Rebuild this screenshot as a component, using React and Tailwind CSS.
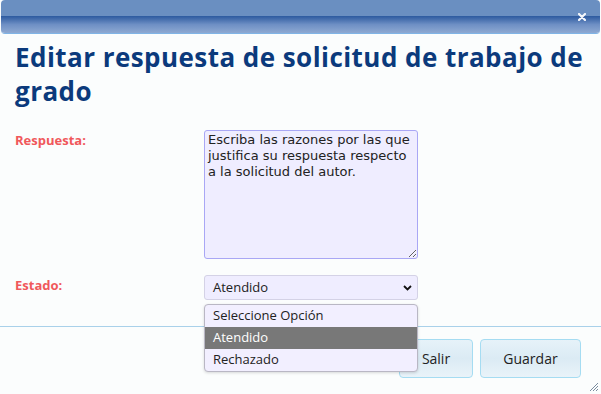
import React from "react";

export default function App() {
  return (
    <div className="relative w-[601px] h-[394px] overflow-hidden bg-[#fbfdfd]" style={{ fontFamily: '"Open Sans", sans-serif' }}>
      {/* title bar */}
      <div className="mx-[1px] h-[34px] rounded-[4px] border-b border-[#7fb4e6] overflow-hidden flex flex-col relative">
        <div className="h-[16px] bg-[#6a8fc1]" />
        <div className="flex-1 bg-gradient-to-b from-[#2c5a9f] via-[#6e8fc4] to-[#8ea9d2]" />
        <svg className="absolute right-[14px] top-[13px]" width="8" height="8" viewBox="0 0 8 8">
          <path d="M1 1 L7 7 M7 1 L1 7" stroke="#f4f7fb" strokeWidth="2.2" strokeLinecap="round" />
        </svg>
      </div>

      {/* content */}
      <div className="px-[15px] pt-[6px]">
        <h1 className="text-[26px] leading-[34px] font-bold text-[#0b3a7c] tracking-[0.45px]">
          Editar respuesta de solicitud de trabajo de grado
        </h1>

        <div className="mt-[22px] flex">
          <div className="w-[189px] text-[13px] font-bold text-[#f0585b] pt-[1px]">Respuesta:</div>
          <textarea
            className="w-[214px] h-[129px] rounded-[3px] border border-[#a9a7f5] bg-[#efedff] px-[3px] py-[1px] text-[13px] leading-[16px] text-[#222] resize-y outline-none"
            style={{ fontFamily: '"DejaVu Sans", sans-serif' }}
            defaultValue="Escriba las razones por las que justifica su respuesta respecto a la solicitud del autor."
          />
        </div>

        <div className="mt-[16px] flex">
          <div className="w-[189px] text-[13px] font-bold text-[#f0585b] pt-[1px]">Estado:</div>
          <div className="relative w-[214px]">
            <div className="h-[25px] rounded-[3px] border border-[#d4d2e6] bg-[#efedff] flex items-center justify-between pl-[8px] pr-[5px] text-[13px] text-[#222]">
              <span>Atendido</span>
              <svg width="9" height="6" viewBox="0 0 9 6">
                <path d="M1 1 L4.5 4.5 L8 1" stroke="#111" strokeWidth="1.8" fill="none" />
              </svg>
            </div>
            {/* open dropdown */}
            <div className="absolute left-0 top-[29px] z-10 w-[214px] rounded-[4px] border border-[#b9b7c4] bg-[#f2efff] overflow-hidden shadow-[0_1px_3px_rgba(0,0,0,0.15)] text-[13px] text-[#222]">
              <div className="h-[22px] flex items-center pl-[8px]">Seleccione Opción</div>
              <div className="h-[22px] flex items-center pl-[8px] bg-[#787878] text-white">Atendido</div>
              <div className="h-[22px] flex items-center pl-[8px]">Rechazado</div>
            </div>
          </div>
        </div>
      </div>

      {/* footer */}
      <div className="absolute left-0 right-0 top-[326px] border-t border-[#a9d1ea] flex justify-end gap-[7px] pr-[20px] pt-[12px]">
        <button className="w-[74px] h-[39px] rounded-[4px] border border-[#a5dcf2] bg-gradient-to-b from-[#e6f2f9] via-[#dbebf4] to-[#e9f3f9] text-[14px] text-[#222]">Salir</button>
        <button className="w-[101px] h-[39px] rounded-[4px] border border-[#a5dcf2] bg-gradient-to-b from-[#e6f2f9] via-[#dbebf4] to-[#e9f3f9] text-[14px] text-[#222]">Guardar</button>
      </div>

      {/* resize grip */}
      <svg className="absolute right-[2px] bottom-[2px]" width="11" height="11" viewBox="0 0 11 11">
        <path d="M10 2 L2 10 M10 5 L5 10 M10 8 L8 10" stroke="#7a8da0" strokeWidth="1" />
      </svg>
    </div>
  );
}
